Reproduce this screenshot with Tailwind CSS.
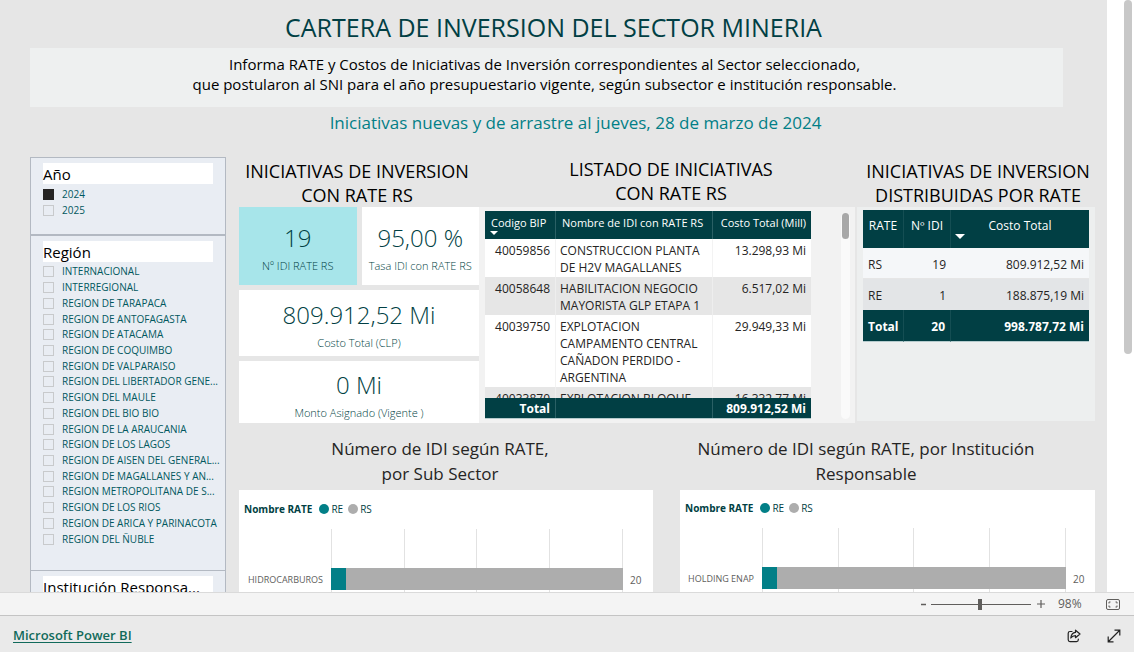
<!DOCTYPE html>
<html lang="es">
<head>
<meta charset="utf-8">
<title>Cartera de inversión del sector minería</title>
<script src="https://cdn.jsdelivr.net/npm/@tailwindcss/browser@4"></script>
</head>
<body class="flex h-screen flex-col overflow-hidden bg-white font-['Open_Sans','Noto_Sans',sans-serif] text-black">
<div class="flex min-h-0 flex-1 overflow-hidden">
  <main class="min-w-0 flex-1 bg-[#e6e6e6]">
    <h1 class="pt-1.5 text-center text-[25px] leading-[42px] text-[#013f44]">CARTERA DE INVERSION DEL SECTOR MINERIA</h1>
    <p class="mr-11 ml-[30px] h-[59px] bg-[#eef0f0] pt-1.5 pr-1 text-center text-[15px] leading-5">Informa RATE y Costos de Iniciativas de Inversión correspondientes al Sector seleccionado,<br>que postularon al SNI para el año presupuestario vigente, según subsector e institución responsable.</p>
    <p class="h-[50px] pt-1 pl-11 text-center text-[17px] leading-6 text-[#027f87]">Iniciativas nuevas y de arrastre al jueves, 28 de marzo de 2024</p>

    <div class="flex gap-[13px] pr-3 pl-[30px]">
      <aside class="w-[196px] shrink-0 text-[10px] text-[#01585e]">
        <fieldset class="h-[78px] border border-[#b3b9c2] bg-[#e9edf3] px-3">
          <h2 class="mt-[5px] mb-0.5 h-[21px] bg-white text-[15px] leading-[22px] text-black">Año</h2>
          <label class="flex h-4 items-center gap-2"><input type="checkbox" checked class="h-[11px] w-[11px] appearance-none border border-[#252423] checked:bg-[#252423]">2024</label>
          <label class="flex h-4 items-center gap-2"><input type="checkbox" class="h-[11px] w-[11px] appearance-none border border-[#c8cacc]">2025</label>
        </fieldset>
        <fieldset class="h-[336px] border border-[#b3b9c2] bg-[#e9edf3] pr-1 pl-3">
          <h2 class="mt-[5px] mr-2 mb-0.5 h-[21px] bg-white text-[15px] leading-[22px] text-black">Región</h2>
          <div id="regions" class="flex h-[283px] flex-col"></div>
        </fieldset>
        <fieldset class="h-[78px] border border-t-0 border-[#b3b9c2] bg-[#e9edf3] px-3">
          <h2 class="mt-[5px] h-[21px] bg-white text-[15px] leading-[22px] whitespace-nowrap text-black">Institución Responsa...</h2>
        </fieldset>
      </aside>

      <div class="min-w-0 flex-1">
        <div class="grid grid-cols-[240fr_376fr_240fr]">
          <section class="min-w-0">
            <h2 class="h-[50px] pt-0.5 pr-1 text-center text-[18px] leading-6">INICIATIVAS DE INVERSION<br>CON RATE RS</h2>
            <div class="grid grid-cols-2 gap-[5px] text-center font-light text-[#013f44]">
              <div class="h-[78px] bg-[#a7e5ea] pt-[15px]"><div class="text-2xl leading-8">19</div><div class="text-[11px] leading-6">Nº IDI RATE RS</div></div>
              <div class="h-[78px] bg-white pt-[15px]"><div class="text-2xl leading-8">95,00 %</div><div class="text-[11px] leading-6">Tasa IDI con RATE RS</div></div>
              <div class="col-span-2 h-[66px] bg-white pt-[9px]"><div class="text-2xl leading-8">809.912,52 Mi</div><div class="text-[11px] leading-6">Costo Total (CLP)</div></div>
              <div class="col-span-2 h-[62px] bg-white pt-2"><div class="text-2xl leading-8">0 Mi</div><div class="text-[11px] leading-6">Monto Asignado (Vigente )</div></div>
            </div>
          </section>

          <section class="min-w-0">
            <h2 class="h-[50px] pl-2 text-center text-[18px] leading-6">LISTADO DE INICIATIVAS<br>CON RATE RS</h2>
            <div class="flex h-[216px] justify-between bg-[#f2f2f2] pt-1 pr-[5px] pb-1 pl-1.5">
              <div class="h-[208px] w-[326px] overflow-hidden border-b border-[#b5cbcd]">
                <table class="w-full table-fixed border-separate border-spacing-0 text-[12px] leading-[17px] text-[#252423]">
                  <colgroup><col class="w-[71px]"><col class="w-[157px]"><col></colgroup>
                  <thead class="bg-[#013f44] text-left text-[11px] text-white">
                    <tr class="h-7 whitespace-nowrap align-top">
                      <th class="relative border-r border-[#2a6065] pt-[3px] pl-1.5 font-normal">Codigo BIP<svg class="absolute top-5 left-[5px]" width="8" height="4" viewBox="0 0 8 4"><path d="M0 0h8L4 4z" fill="#fff"/></svg></th>
                      <th class="border-r border-[#2a6065] pt-[3px] pl-1.5 font-normal">Nombre de IDI con RATE RS</th>
                      <th class="pt-[3px] pr-[5px] text-right font-normal">Costo Total (Mill)</th>
                    </tr>
                  </thead>
                  <tbody class="align-top">
                    <tr class="h-[38px] bg-white"><td class="border-r border-[#f3f3f3] pt-[3px] pr-[5px] text-right">40059856</td><td class="border-r border-[#f3f3f3] pt-[3px] pl-1">CONSTRUCCION PLANTA<br>DE H2V MAGALLANES</td><td class="pt-[3px] pr-[5px] text-right">13.298,93 Mi</td></tr>
                    <tr class="h-[38px] bg-[#e6e6e6]"><td class="border-r border-[#eee] pt-[3px] pr-[5px] text-right">40058648</td><td class="border-r border-[#eee] pt-[3px] pl-1">HABILITACION NEGOCIO<br>MAYORISTA GLP ETAPA 1</td><td class="pt-[3px] pr-[5px] text-right">6.517,02 Mi</td></tr>
                    <tr class="h-[72px] bg-white"><td class="border-r border-[#f3f3f3] pt-[3px] pr-[5px] text-right">40039750</td><td class="border-r border-[#f3f3f3] pt-[3px] pl-1">EXPLOTACION<br>CAMPAMENTO CENTRAL<br>CAÑADON PERDIDO -<br>ARGENTINA</td><td class="pt-[3px] pr-[5px] text-right">29.949,33 Mi</td></tr>
                    <tr class="h-[38px] bg-[#e6e6e6]"><td class="border-r border-[#eee] pt-[3px] pr-[5px] text-right">40033870</td><td class="border-r border-[#eee] pt-[3px] pl-1">EXPLOTACION BLOQUE</td><td class="pt-[3px] pr-[5px] text-right">16.332,77 Mi</td></tr>
                  </tbody>
                  <tfoot class="sticky bottom-0 bg-[#013f44] text-right font-bold text-white">
                    <tr class="h-5"><td class="border-r border-[#2a6065] pr-[5px]">Total</td><td class="border-r border-[#2a6065]"></td><td class="pr-[5px]">809.912,52 Mi</td></tr>
                  </tfoot>
                </table>
              </div>
              <div class="mt-0.5 w-[9px] rounded-full bg-[#fafafa]"><div class="mx-auto h-[26px] w-[7px] rounded-full bg-[#a8a8a8]"></div></div>
            </div>
          </section>

          <section class="min-w-0">
            <h2 class="h-[50px] pt-0.5 pl-1.5 text-center text-[18px] leading-6">INICIATIVAS DE INVERSION<br>DISTRIBUIDAS POR RATE</h2>
            <div class="ml-0.5 h-[214px] bg-[#edefef] pt-[3px] pr-1.5 pl-1.5">
              <table class="w-full table-fixed border-separate border-spacing-0 text-right text-[12px] leading-[17px] text-[#252423]">
                <colgroup><col class="w-[41px]"><col class="w-[47px]"><col></colgroup>
                <thead class="bg-[#013f44] text-white"><tr class="h-[38px] align-top">
                  <th class="border-r border-[#144e53] pt-[7px] text-center font-normal">RATE</th><th class="border-r border-[#144e53] pt-[7px] text-center font-normal">Nº IDI</th><th class="relative pt-[7px] text-center font-normal">Costo Total<svg class="absolute top-6 left-1" width="10" height="5" viewBox="0 0 10 5"><path d="M0 0h10L5 5z" fill="#fff"/></svg></th></tr></thead>
                <tbody>
                  <tr class="h-[31px] bg-[#f5f7f9]"><td class="border-b border-[#e6e6e6] pt-0.5 pl-[5px] text-left">RS</td><td class="border-b border-[#e6e6e6] pt-0.5 pr-[5px]">19</td><td class="border-b border-[#e6e6e6] pt-0.5 pr-[5px]">809.912,52 Mi</td></tr>
                  <tr class="h-[31px] bg-[#e3e5e7]"><td class="pt-0.5 pl-[5px] text-left">RE</td><td class="pt-0.5 pr-[5px]">1</td><td class="pt-0.5 pr-[5px]">188.875,19 Mi</td></tr>
                </tbody>
                <tfoot class="bg-[#013f44] font-bold text-white"><tr class="h-8"><td class="border-r border-b border-[#b5cbcd] border-r-[#144e53] pt-0.5 pl-[5px] text-left">Total</td><td class="border-r border-b border-[#b5cbcd] border-r-[#144e53] pt-0.5 pr-[5px]">20</td><td class="border-b border-[#b5cbcd] pt-0.5 pr-[5px]">998.787,72 Mi</td></tr></tfoot>
              </table>
            </div>
          </section>
        </div>

        <div class="mt-[13px] grid grid-cols-[414fr_415fr] gap-[27px]">
          <section class="min-w-0">
            <h2 class="h-[54px] pr-3 text-center text-[17px] leading-[25px] text-[#252423]">Número de IDI según RATE,<br>por Sub Sector</h2>
            <div class="h-[160px] bg-white pt-[11px] text-[10px] text-[#013f44]">
              <div class="flex h-4 items-center pl-[5px]"><b class="mr-[7px]">Nombre RATE</b><i class="mr-0.5 h-2.5 w-2.5 rounded-full bg-[#027f87]"></i>RE<i class="mr-0.5 ml-[5px] h-2.5 w-2.5 rounded-full bg-[#adadad]"></i>RS</div>
              <div class="mt-3 grid h-[120px] grid-cols-[92px_1fr_30px] text-[#605e5c]">
                <div class="pt-[43px] pr-2 text-right text-[9px] leading-4">HIDROCARBUROS</div>
                <div class="col-start-2 row-start-1 grid grid-cols-4 divide-x divide-[#e2e2e2] border-x border-[#e2e2e2]"><i></i><i></i><i></i><i></i></div>
                <div class="col-start-2 row-start-1 mt-[39px] flex h-[22px] bg-[#adadad]"><div class="w-[5%] bg-[#027f87]"></div></div>
                <div class="pt-[43px] pl-[7px] text-[10px] leading-4">20</div>
              </div>
            </div>
          </section>
          <section class="min-w-0">
            <h2 class="h-[54px] pr-[43px] text-center text-[17px] leading-[25px] text-[#252423]">Número de IDI según RATE, por Institución<br>Responsable</h2>
            <div class="h-[160px] bg-white pt-2.5 text-[10px] text-[#013f44]">
              <div class="flex h-4 items-center pl-[5px]"><b class="mr-[7px]">Nombre RATE</b><i class="mr-0.5 h-2.5 w-2.5 rounded-full bg-[#027f87]"></i>RE<i class="mr-0.5 ml-[5px] h-2.5 w-2.5 rounded-full bg-[#adadad]"></i>RS</div>
              <div class="mt-3 grid h-[120px] grid-cols-[82px_1fr_29px] text-[#605e5c]">
                <div class="pt-[43px] pr-2 text-right text-[9px] leading-4">HOLDING ENAP</div>
                <div class="col-start-2 row-start-1 grid grid-cols-4 divide-x divide-[#e2e2e2] border-x border-[#e2e2e2]"><i></i><i></i><i></i><i></i></div>
                <div class="col-start-2 row-start-1 mt-[39px] flex h-[22px] bg-[#adadad]"><div class="w-[5%] bg-[#027f87]"></div></div>
                <div class="pt-[43px] pl-[7px] text-[10px] leading-4">20</div>
              </div>
            </div>
          </section>
        </div>
      </div>
    </div>
  </main>
  <div class="flex w-[27px] shrink-0 justify-end bg-white pr-0.5"><div class="h-[354px] w-2 rounded-full bg-[#c8c8c8]"></div></div>
</div>

<div class="flex h-[23px] shrink-0 items-center justify-end border-t border-[#dadada] bg-[#f4f4f4] pr-[14px] text-[12px] text-[#605e5c]">
  <button type="button" aria-label="Alejar" class="mr-[5px]"><svg width="5" height="12" viewBox="0 0 5 12"><path d="M0 6.500h5" stroke="#605e5c" stroke-width="1.500"/></svg></button>
  <input type="range" aria-label="Zoom" min="0" max="100" value="49" class="h-3 w-[100px] appearance-none bg-[linear-gradient(#605e5c,#605e5c)] bg-[length:100%_1px] bg-center bg-no-repeat [&::-webkit-slider-thumb]:h-[11px] [&::-webkit-slider-thumb]:w-1 [&::-webkit-slider-thumb]:appearance-none [&::-webkit-slider-thumb]:bg-[#605e5c]">
  <button type="button" aria-label="Acercar" class="mr-[13px] ml-1.5"><svg width="8" height="8" viewBox="0 0 8 8"><path d="M0 4h8M4 0v8" stroke="#605e5c" stroke-width="1.200"/></svg></button>
  <span class="w-[48px] text-[12px]">98%</span>
  <button type="button" aria-label="Ajustar a la página"><svg width="14" height="11" viewBox="0 0 14 11" fill="none" stroke="#605e5c"><rect x=".5" y=".5" width="13" height="10" rx="1.500"/><path d="M4.500 3H3v1.500M3 6.500V8h1.500M9.500 3H11v1.500M11 6.500V8H9.500"/></svg></button>
</div>
<footer class="flex h-[37px] shrink-0 items-center justify-between border-t border-[#c4c4c4] bg-[#eaeaea] pt-1 pr-[13px] pl-[13px]">
  <a href="#" class="text-[13px] font-semibold text-[#116a5b] underline underline-offset-2">Microsoft Power BI</a>
  <div class="flex items-center gap-[26px]">
    <button type="button" aria-label="Compartir"><svg width="14" height="14" viewBox="0 0 14 14" fill="none" stroke="#222" stroke-width="1.200" stroke-linejoin="round" stroke-linecap="round"><path d="M5 2.500H3A1.800 1.800 0 0 0 1.200 4.300v6.500A1.800 1.800 0 0 0 3 12.600h6.500a1.800 1.800 0 0 0 1.800-1.800V10"/><path d="M8.500 1.200 13 5 8.500 8.700V6.600C6.300 6.600 4.900 7.400 3.800 9c.3-3 1.800-5.200 4.700-5.600z"/></svg></button>
    <button type="button" aria-label="Pantalla completa"><svg width="14" height="14" viewBox="0 0 14 14" fill="none" stroke="#222" stroke-width="1.200"><path d="M1.500 12.500l11-11M7.500 1.200h5.300v5.300M1.200 7.500v5.300h5.300"/></svg></button>
  </div>
</footer>
<script>
const regions = ['INTERNACIONAL','INTERREGIONAL','REGION DE TARAPACA','REGION DE ANTOFAGASTA','REGION DE ATACAMA','REGION DE COQUIMBO','REGION DE VALPARAISO','REGION DEL LIBERTADOR GENE...','REGION DEL MAULE','REGION DEL BIO BIO','REGION DE LA ARAUCANIA','REGION DE LOS LAGOS','REGION DE AISEN DEL GENERAL...','REGION DE MAGALLANES Y AN...','REGION METROPOLITANA DE S...','REGION DE LOS RIOS','REGION DE ARICA Y PARINACOTA','REGION DEL ÑUBLE'];
document.getElementById('regions').innerHTML = regions.map(r => `<label class="flex min-h-0 flex-1 items-center gap-2 whitespace-nowrap"><input type="checkbox" class="h-[11px] w-[11px] shrink-0 appearance-none border border-[#c8cacc]">${r}</label>`).join('');
</script>
</body>
</html>
